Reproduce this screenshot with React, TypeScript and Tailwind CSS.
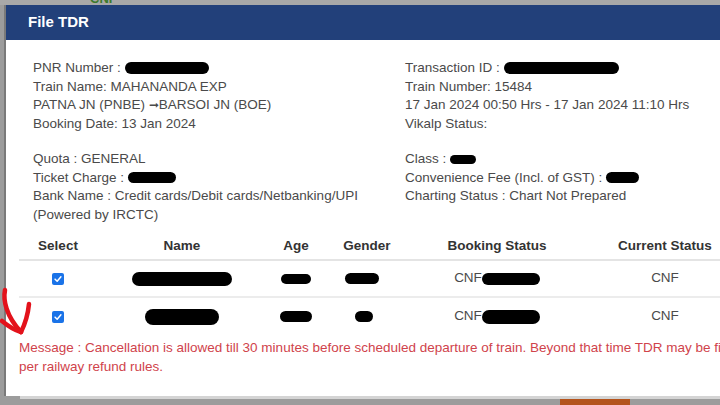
import React from "react";

const Blob = ({ className }: { className: string }) => (
  <span className={"inline-block bg-black rounded-full align-middle " + className} />
);

const Check = () => (
  <span className="inline-flex h-[12px] w-[12px] items-center justify-center rounded-[2px] bg-[#1a73e8]">
    <svg viewBox="0 0 12 12" className="h-[10px] w-[10px]">
      <path d="M2.5 6.2 L5 8.6 L9.5 3.4" fill="none" stroke="white" strokeWidth="1.8" strokeLinecap="round" strokeLinejoin="round" />
    </svg>
  </span>
);

const cols = "grid grid-cols-[78px_170px_58px_84px_176px_160px]";

export default function App() {
  return (
    <div className="relative h-[405px] w-[720px] overflow-hidden bg-[#9c9c9c] font-['Liberation_Sans',Arial,sans-serif]">
      {/* bit of page behind the modal */}
      <div className="h-[5px] overflow-hidden bg-[#a8a8a8] pl-[90px]">
        <span className="-mt-[11px] block text-[13px] font-bold text-[#3c7a2c]">CNF</span>
      </div>

      <div className="ml-[4px] flex h-[391px] w-[780px] flex-col border-l-2 border-[#7a7a7a] bg-white">
        <div className="flex h-[35px] items-center bg-[#22407a] pl-[22px] text-[15px] font-bold text-white">
          File TDR
        </div>

        <div className="flex pt-[19px] text-[13.5px] leading-[18.5px] text-[#4a4a4a]">
          <div className="w-[399px] pl-[27px]">
            <div>PNR Number : <Blob className="h-[12px] w-[84px]" /></div>
            <div>Train Name: MAHANANDA EXP</div>
            <div>PATNA JN (PNBE) <span className="text-[12px]">➞</span>BARSOI JN (BOE)</div>
            <div>Booking Date: 13 Jan 2024</div>
            <div className="mt-[17px]">Quota : GENERAL</div>
            <div>Ticket Charge : <Blob className="h-[11px] w-[48px] rounded-[4px]" /></div>
            <div>Bank Name : Credit cards/Debit cards/Netbanking/UPI</div>
            <div>(Powered by IRCTC)</div>
          </div>
          <div>
            <div>Transaction ID : <Blob className="h-[12px] w-[115px]" /></div>
            <div>Train Number: 15484</div>
            <div>17 Jan 2024 00:50 Hrs - 17 Jan 2024 11:10 Hrs</div>
            <div>Vikalp Status:</div>
            <div className="mt-[17px]">Class : <Blob className="h-[9px] w-[26px]" /></div>
            <div>Convenience Fee (Incl. of GST) : <Blob className="h-[11px] w-[33px]" /></div>
            <div>Charting Status : Chart Not Prepared</div>
          </div>
        </div>

        <div className="ml-[13px] mt-[9px] text-[13.5px]">
          <div className={cols + " h-[28px] items-center border-b-2 border-[#e4e4e4] text-center font-bold text-[#333]"}>
            <div>Select</div>
            <div>Name</div>
            <div>Age</div>
            <div>Gender</div>
            <div>Booking Status</div>
            <div>Current Status</div>
          </div>
          <div className={cols + " h-[37px] items-center border-b-2 border-[#ececec] text-center text-[#4a4a4a]"}>
            <div className="flex justify-center"><Check /></div>
            <div><Blob className="h-[14px] w-[100px] rounded-[7px]" /></div>
            <div><Blob className="h-[10px] w-[30px]" /></div>
            <div><Blob className="ml-[-10px] h-[11px] w-[34px]" /></div>
            <div>CNF<Blob className="h-[12px] w-[58px]" /></div>
            <div>CNF</div>
          </div>
          <div className={cols + " h-[37px] items-center text-center text-[#4a4a4a]"}>
            <div className="flex justify-center"><Check /></div>
            <div><Blob className="h-[16px] w-[74px]" /></div>
            <div><Blob className="h-[11px] w-[32px]" /></div>
            <div><Blob className="ml-[-6px] h-[11px] w-[18px]" /></div>
            <div>CNF<Blob className="h-[14px] w-[58px]" /></div>
            <div>CNF</div>
          </div>
        </div>

        <div className="ml-[13px] mt-[3px] text-[13.5px] leading-[19px] text-[#d0434b]">
          <div className="whitespace-nowrap">
            Message : Cancellation is allowed till 30 minutes before scheduled departure of train. Beyond that time TDR may be filed as
          </div>
          <div>per railway refund rules.</div>
        </div>
      </div>

      <div className="h-[3px] bg-[#d4d4d4] ml-[20px]" />
      <div className="flex h-[6px]">
        <div className="ml-[560px] w-[70px] bg-[#b4531c]" />
      </div>

      {/* hand-drawn red arrow */}
      <svg className="absolute left-0 top-[286px] h-[52px] w-[34px]" viewBox="0 0 34 52">
        <g fill="none" stroke="#e3121b" strokeWidth="4.5" strokeLinecap="round" strokeLinejoin="round">
          <path d="M5 4 C 3 14, 6 30, 21 46" />
          <path d="M29 18 C 28 28, 25 38, 21 46" />
          <path d="M2 35 C 8 40, 14 44, 21 46" />
        </g>
      </svg>
    </div>
  );
}
